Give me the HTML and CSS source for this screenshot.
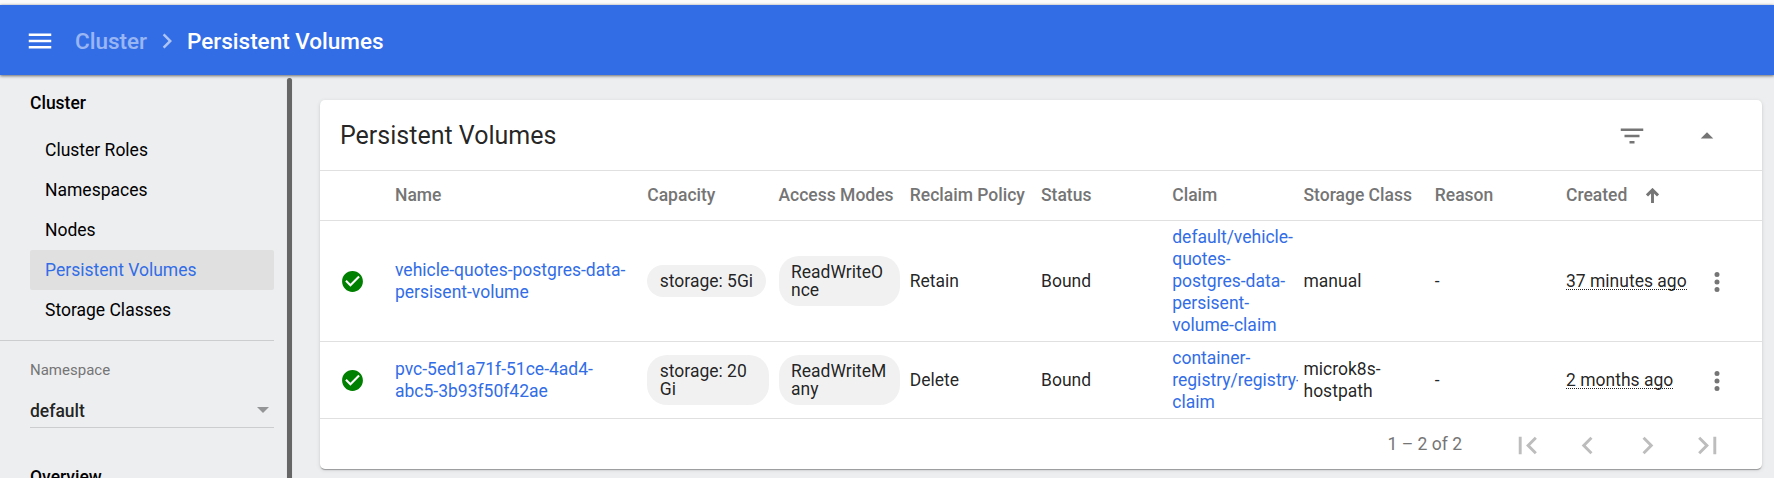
FILE: index.html
```html
<!DOCTYPE html>
<html lang="en">
<head>
<meta charset="utf-8">
<title>Persistent Volumes</title>
<link rel="stylesheet" href="styles.css">
</head>
<body>
<header class="toolbar">
  <svg class="icon menu" viewBox="0 0 24 24"><path d="M3 18h18v-2H3v2zm0-5h18v-2H3v2zm0-7v2h18V6H3z"/></svg>
  <span class="crumb">Cluster</span>
  <svg class="icon crumb-sep" viewBox="0 0 24 24"><path d="M10 6L8.59 7.41 13.17 12l-4.58 4.59L10 18l6-6z"/></svg>
  <span class="crumb-current">Persistent Volumes</span>
</header>
<div class="body">
  <nav class="sidebar">
    <div class="menu-list">
      <div class="group">Cluster</div>
      <div class="item">Cluster Roles</div>
      <div class="item">Namespaces</div>
      <div class="item">Nodes</div>
      <div class="item active">Persistent Volumes</div>
      <div class="item">Storage Classes</div>
      <div class="divider"></div>
      <div class="ns-label">Namespace</div>
      <div class="ns-select"><span class="ns-value">default</span><i class="caret"></i></div>
      <div class="group overview">Overview</div>
    </div>
    <div class="scroll-thumb"></div>
  </nav>
  <main class="content">
    <section class="card">
      <div class="card-head">
        <h1>Persistent Volumes</h1>
        <svg class="icon filter" viewBox="0 0 24 24"><path d="M10 18h4v-2h-4v2zM3 6v2h18V6H3zm3 7h12v-2H6v2z"/></svg>
        <svg class="icon" viewBox="0 0 24 24"><path d="M7 14l5-5 5 5z"/></svg>
      </div>
      <div class="row head">
        <div></div><div>Name</div><div>Capacity</div><div>Access Modes</div><div>Reclaim Policy</div><div>Status</div><div>Claim</div><div>Storage Class</div><div>Reason</div>
        <div class="sorted">Created<svg class="sort" viewBox="0 0 13 15"><path d="M6.5 15V2M1 7.4L6.5 1.9 12 7.4"/></svg></div><div></div>
      </div>
      <div class="row first">
        <div class="status"><svg viewBox="0 0 24 24"><path d="M12 2C6.480 2 2 6.480 2 12s4.480 10 10 10 10-4.480 10-10S17.520 2 12 2zm-2 15l-5-5 1.410-1.410L10 14.170l7.590-7.590L19 8l-9 9z"/></svg></div>
        <div class="link">vehicle-quotes-postgres-data-<br>persisent-volume</div>
        <div><span class="chip">storage: 5Gi</span></div>
        <div><span class="chip">ReadWriteOnce</span></div>
        <div>Retain</div><div>Bound</div>
        <div class="link claim">default/vehicle-<br>quotes-<br>postgres-data-<br>persisent-<br>volume-claim</div>
        <div>manual</div><div>-</div>
        <div><span class="age">37 minutes ago</span></div>
        <div class="more"><svg class="icon" viewBox="0 0 24 24"><path d="M12 8a2 2 0 1 0 0-4 2 2 0 0 0 0 4zm0 2a2 2 0 1 0 0 4 2 2 0 0 0 0-4zm0 6a2 2 0 1 0 0 4 2 2 0 0 0 0-4z"/></svg></div>
      </div>
      <div class="row second">
        <div class="status"><svg viewBox="0 0 24 24"><path d="M12 2C6.480 2 2 6.480 2 12s4.480 10 10 10 10-4.480 10-10S17.520 2 12 2zm-2 15l-5-5 1.410-1.410L10 14.170l7.590-7.590L19 8l-9 9z"/></svg></div>
        <div class="link">pvc-5ed1a71f-51ce-4ad4-<br>abc5-3b93f50f42ae</div>
        <div><span class="chip">storage: 20Gi</span></div>
        <div><span class="chip">ReadWriteMany</span></div>
        <div>Delete</div><div>Bound</div>
        <div class="link claim">container-<br>registry/registry-<br>claim</div>
        <div>microk8s-<br>hostpath</div><div>-</div>
        <div><span class="age">2 months ago</span></div>
        <div class="more"><svg class="icon" viewBox="0 0 24 24"><path d="M12 8a2 2 0 1 0 0-4 2 2 0 0 0 0 4zm0 2a2 2 0 1 0 0 4 2 2 0 0 0 0-4zm0 6a2 2 0 1 0 0 4 2 2 0 0 0 0-4z"/></svg></div>
      </div>
      <div class="pager">
        <span class="range">1 – 2 of 2</span>
        <svg viewBox="0 0 24 24"><path d="M18.410 16.590L13.820 12l4.590-4.590L17 6l-6 6 6 6zM6 6h2v12H6z"/></svg>
        <svg viewBox="0 0 24 24"><path d="M15.410 7.410L14 6l-6 6 6 6 1.410-1.410L10.830 12z"/></svg>
        <svg viewBox="0 0 24 24"><path d="M10 6L8.590 7.410 13.170 12l-4.580 4.590L10 18l6-6z"/></svg>
        <svg viewBox="0 0 24 24"><path d="M5.590 7.410L10.180 12l-4.590 4.590L7 18l6-6-6-6zM16 6h2v12h-2z"/></svg>
      </div>
    </section>
  </main>
</div>
</body>
</html>
```
FILE: styles.css
```css
* { box-sizing: border-box; }
body {
  margin: 0;
  padding-top: 5px;
  height: 478px;
  overflow: hidden;
  display: flex;
  flex-direction: column;
  background: #fafafa;
  font: 17.5px/22px Roboto, sans-serif;
  color: rgba(0, 0, 0, .87);
}
svg { display: block; flex: none; fill: currentColor; }
.icon { width: 30px; height: 30px; }
.toolbar {
  position: relative;
  z-index: 2;
  flex: none;
  height: 70px;
  padding: 2px 0 0 25px;
  display: flex;
  align-items: center;
  background: #326de6;
  color: #fff;
  font-size: 22.5px;
  font-weight: 500;
  box-shadow: 0 0 2.5px rgba(0, 0, 0, .15), 0 1px 3px rgba(0, 0, 0, .5);
}
.crumb { margin-left: 20px; opacity: .5; }
.crumb-sep { margin: 0 5px; opacity: .6; }
.body { flex: 1; min-height: 0; display: flex; background: #edeef0; }
.sidebar { flex: none; width: 293px; display: flex; overflow: hidden; }
.menu-list { width: 274px; padding-top: 17px; margin-right: 13px; color: #000; }
.group { height: 38px; padding-left: 30px; font-weight: 500; }
.item { height: 40px; margin-left: 30px; padding-left: 15px; line-height: 40px; border-radius: 2px; }
.active { background: #e0e0e0; color: #326de6; }
.divider { height: 1px; margin-top: 10px; background: #cccdcf; }
.ns-label { margin: 18px 0 0 30px; font-size: 15px; line-height: 22px; color: #757576; }
.ns-select {
  height: 47px;
  margin-left: 30px;
  padding: 12px 5px 0 0;
  display: flex;
  align-items: center;
  justify-content: space-between;
  font-weight: 500;
  color: rgba(0, 0, 0, .87);
  border-bottom: 1px solid #cccdcf;
}
.ns-value { margin-top: 2px; }
.caret { border: 6.25px solid transparent; border-top-color: #949596; border-bottom: 0; }
.overview { margin-top: 38px; }
.scroll-thumb { width: 5px; height: 420px; margin-top: 3px; border-radius: 3px; background: #666; flex: none; box-shadow: 0 0 1px #bbb; }
.content { flex: 1; padding: 25px 12px 0 27px; }
.card {
  height: 369px;
  border-radius: 5px;
  background: #fff;
  box-shadow: 0 2px 1px -1px rgba(0, 0, 0, .2), 0 1px 1px rgba(0, 0, 0, .14), 0 1px 4px rgba(0, 0, 0, .12);
}
.card-head { height: 71px; padding: 1px 40px 0 20px; display: flex; align-items: center; border-bottom: 1px solid #e0e0e0; color: #757575; }
h1 { margin: 0 auto 0 0; font-size: 25px; line-height: 30px; font-weight: 400; color: rgba(0, 0, 0, .87); }
.filter { margin-right: 45px; }
.row {
  display: grid;
  grid-template-columns: 55px 252.25px repeat(8, 131.25px) 1fr;
  padding-left: 20px;
  align-items: center;
  border-bottom: 1px solid #e0e0e0;
}
.head { height: 50px; padding-bottom: 2px; color: #757575; font-weight: 500; }
.first { height: 121px; }
.second { height: 77px; }
.sorted { display: flex; align-items: center; }
.sort { width: 13px; height: 15px; margin: 1px 0 0 18.5px; fill: none; stroke: #757575; stroke-width: 2.9; }
.status { color: #008000; }
.status svg { width: 25px; height: 25px; }
.link { color: #326de6; }
.claim { width: 126px; overflow: hidden; }
.chip {
  display: inline-block;
  vertical-align: top;
  max-width: 121.25px;
  padding: 7px 12.5px;
  border-radius: 20px;
  background: #f1f1f1;
  line-height: 18px;
  word-break: break-all;
}
.age { border-bottom: 1px dotted #222; line-height: 18px; display: block; width: fit-content; height: 18px; }
.more { color: #757575; padding: 1px 0 0 4.25px; }
.pager { height: 51px; padding-right: 37px; display: flex; align-items: center; justify-content: flex-end; gap: 25px; color: #bdbdbd; }
.pager svg { width: 35px; height: 35px; margin-top: 2px; }
.range { margin: 0 23px 1px 0; color: #757575; }
```
